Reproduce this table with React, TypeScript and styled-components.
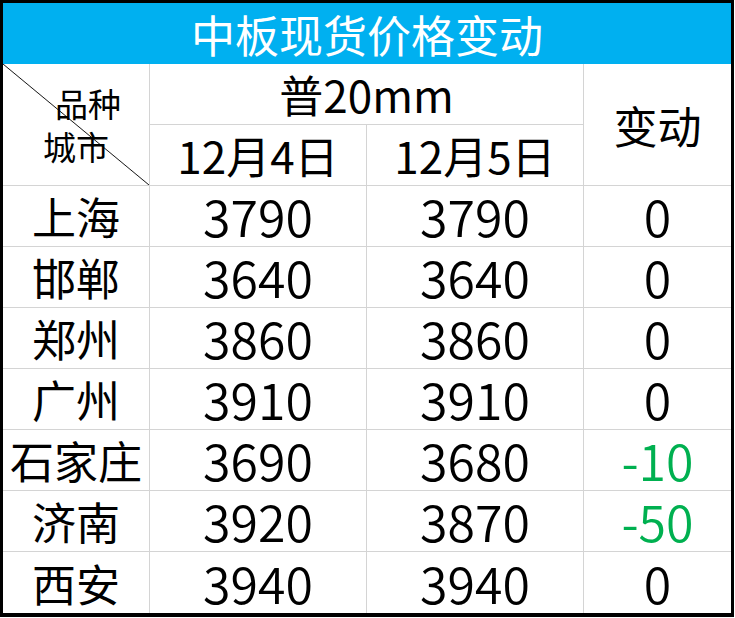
import React from 'react'
import styled, { createGlobalStyle } from 'styled-components'

const GlobalStyle = createGlobalStyle`
  html, body {
    margin: 0;
    padding: 0;
    background: #ffffff;
  }
`

const rows = [
  { city: '上海', d4: 3790, d5: 3790 },
  { city: '邯郸', d4: 3640, d5: 3640 },
  { city: '郑州', d4: 3860, d5: 3860 },
  { city: '广州', d4: 3910, d5: 3910 },
  { city: '石家庄', d4: 3690, d5: 3680 },
  { city: '济南', d4: 3920, d5: 3870 },
  { city: '西安', d4: 3940, d5: 3940 },
]

const App = () => {
  return (
    <>
      <GlobalStyle />
      <Sheet>
        <Title>中板现货价格变动</Title>
        <DiagCell>
          <Label $indent={52}>品种</Label>
          <Label $indent={40}>城市</Label>
        </DiagCell>
        <Cell $span={2}>普20mm</Cell>
        <Cell $rows={2} $edge>
          变动
        </Cell>
        <Cell>12月4日</Cell>
        <Cell>12月5日</Cell>
        {rows.map((r, i) => {
          const diff = r.d5 - r.d4
          const last = i === rows.length - 1
          return (
            <React.Fragment key={r.city}>
              <Cell $last={last}>{r.city}</Cell>
              <Cell $last={last}>
                <Num>{r.d4}</Num>
              </Cell>
              <Cell $last={last}>
                <Num>{r.d5}</Num>
              </Cell>
              <Cell $last={last} $edge $down={diff < 0}>
                <Num>{diff}</Num>
              </Cell>
            </React.Fragment>
          )
        })}
      </Sheet>
    </>
  )
}

export default App

const Sheet = styled.div`
  width: 734px;
  box-sizing: border-box;
  border: 3px solid #000000;
  border-bottom-width: 4px;
  display: grid;
  grid-template-columns: 147px 217px 217px 147px;
  grid-auto-rows: 61px;
  font-family: 'Noto Sans CJK SC', sans-serif;
  color: #000000;
`
const Title = styled.div`
  grid-column: 1 / -1;
  background: #00b0f0;
  color: #ffffff;
  font-size: 44px;
  line-height: 1;
  display: flex;
  align-items: center;
  justify-content: center;
`
const Cell = styled.div<{
  $span?: number
  $rows?: number
  $edge?: boolean
  $last?: boolean
  $down?: boolean
}>`
  grid-column: span ${(p) => p.$span || 1};
  grid-row: span ${(p) => p.$rows || 1};
  box-sizing: border-box;
  display: flex;
  align-items: center;
  justify-content: center;
  border-right: ${(p) => (p.$edge ? 'none' : '1px solid #d4d4d4')};
  border-bottom: ${(p) => (p.$last ? 'none' : '1px solid #d4d4d4')};
  font-size: 44px;
  line-height: 1;
  white-space: nowrap;
  color: ${(p) => (p.$down ? '#00b050' : '#000000')};
`
const Num = styled.span`
  display: inline-block;
  height: 50px;
  font-weight: 350;
  font-size: 50px;
  line-height: 50px;
  margin-top: -2px;
`
const DiagCell = styled.div`
  grid-row: span 2;
  box-sizing: border-box;
  border-right: 1px solid #d4d4d4;
  border-bottom: 1px solid #d4d4d4;
  display: flex;
  flex-direction: column;
  justify-content: center;
  gap: 10px;
  font-size: 33px;
  line-height: 1;
  background: linear-gradient(
    to top right,
    transparent calc(50% - 0.8px),
    #1a1a1a 50%,
    transparent calc(50% + 0.8px)
  );
`
const Label = styled.span<{ $indent: number }>`
  padding-left: ${(p) => p.$indent}px;
`
